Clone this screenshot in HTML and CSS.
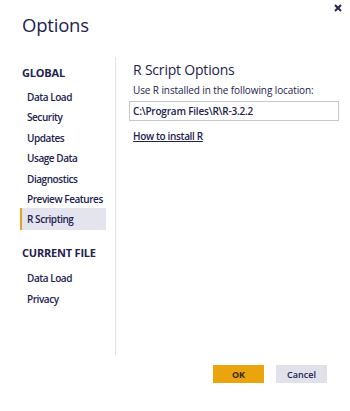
FILE: index.html
```html
<!DOCTYPE html>
<html lang="en">

<head>
    <meta charset="UTF-8">
    <meta name="viewport" content="width=device-width, initial-scale=1.0">
    <title>Options</title>
    <link rel="stylesheet" href="styles.css">
</head>

<body>
    <div class="dialog">
        <!-- 标题栏 -->
        <div class="dialog-header">
            <h1>Options</h1>
            <svg class="close" width="10" height="10" viewBox="0 0 10 10">
                <path d="M2 2 L8 8 M8 2 L2 8" stroke="#22224e" stroke-width="2" fill="none"/>
            </svg>
        </div>

        <div class="dialog-body">
            <!-- 左侧导航 -->
            <div class="sidebar">
                <div class="group-title">GLOBAL</div>
                <div class="nav-item">Data Load</div>
                <div class="nav-item">Security</div>
                <div class="nav-item">Updates</div>
                <div class="nav-item">Usage Data</div>
                <div class="nav-item">Diagnostics</div>
                <div class="nav-item">Preview Features</div>
                <div class="nav-item active">R Scripting</div>

                <div class="group-title second">CURRENT FILE</div>
                <div class="nav-item">Data Load</div>
                <div class="nav-item">Privacy</div>
            </div>

            <!-- 右侧内容 -->
            <div class="content">
                <h2>R Script Options</h2>
                <label for="r_path">Use R installed in the following location:</label>
                <input type="text" id="r_path" value="C:\Program Files\R\R-3.2.2">
                <a href="#" class="link">How to install R</a>
            </div>
        </div>

        <!-- 底部按钮 -->
        <div class="dialog-footer">
            <button class="btn-ok">OK</button>
            <button class="btn-cancel">Cancel</button>
        </div>
    </div>
</body>

</html>
```

FILE: styles.css
```css
/* 全局样式设置 */
body {
    font-family: 'Open Sans', 'Noto Sans', sans-serif;
    background-color: #ffffff;
    color: #22224e;
    margin: 0;
    padding: 0;
}

.dialog {
    width: 350px;
    height: 411px;
    display: flex;
    flex-direction: column;
}

/* 标题栏 */
.dialog-header {
    display: flex;
    justify-content: space-between;
    align-items: flex-start;
    padding: 0 7px 0 22px;
    height: 57px;
}

h1 {
    margin: 12px 0 0;
    font-size: 18.5px;
    line-height: 26px;
    font-weight: 400;
    color: #22224e;
    letter-spacing: -0.2px;
}

.close {
    margin-top: 3px;
}

/* 主体 */
.dialog-body {
    display: flex;
    height: 298px;
}

.sidebar {
    width: 95px;
    padding-left: 20px;
    border-right: 1px solid #e2e2e2;
}

.group-title {
    font-size: 11px;
    font-weight: 700;
    color: #22224e;
    padding-left: 2px;
    margin-top: 8px;
    margin-bottom: 6px;
    line-height: 16px;
    letter-spacing: -0.2px;
}

.group-title.second {
    margin-top: 15px;
    margin-bottom: 7px;
}

.nav-item {
    font-size: 10px;
    font-weight: 600;
    color: #22224e;
    height: 20.4px;
    line-height: 20.4px;
    padding-left: 7px;
    margin-right: 9px;
    white-space: nowrap;
    letter-spacing: -0.45px;
}

.nav-item.active {
    background-color: #e4e4ee;
    border-left: 2px solid #e0a526;
    padding-left: 5px;
    height: 22px;
    line-height: 22px;
    margin-top: -1px;
}

/* 右侧内容 */
.content {
    flex: 1;
    padding: 3px 11px 0 13px;
}

h2 {
    margin: 0 0 3px 4px;
    font-size: 14px;
    line-height: 20px;
    font-weight: 400;
    color: #22224e;
    letter-spacing: -0.2px;
}

label {
    display: block;
    margin-left: 4px;
    font-size: 10px;
    color: #22224e;
    line-height: 14px;
    margin-bottom: 4px;
    letter-spacing: -0.1px;
}

input[type="text"] {
    display: block;
    width: 100%;
    height: 20px;
    box-sizing: border-box;
    border: 1px solid #c8c8c8;
    padding: 0 3px;
    font-family: inherit;
    font-size: 10px;
    font-weight: 600;
    color: #22224e;
    letter-spacing: -0.2px;
    outline: none;
}

.link {
    display: inline-block;
    margin: 8px 0 0 4px;
    font-size: 10px;
    font-weight: 600;
    color: #22224e;
    text-decoration: underline;
    letter-spacing: -0.35px;
}

/* 底部按钮 */
.dialog-footer {
    display: flex;
    justify-content: flex-end;
    gap: 12px;
    padding: 10px 23px 0 0;
}

button {
    width: 51px;
    height: 18px;
    border: none;
    padding: 0;
    font-family: inherit;
    font-size: 9px;
    font-weight: 600;
    cursor: pointer;
}

.btn-ok {
    background-color: #e9a40e;
    color: #3a2a00;
    font-weight: 700;
}

.btn-cancel {
    background-color: #e1e1ec;
    color: #22224e;
}
```
